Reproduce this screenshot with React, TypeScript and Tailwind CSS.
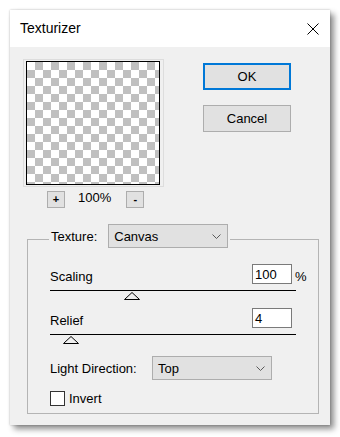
import React from "react";

const Triangle = () => (
  <svg width="16" height="8" viewBox="0 0 16 8" className="block">
    <path d="M0.5 7.5 L8 0.5 L15.5 7.5 Z" fill="none" stroke="#000" strokeWidth="1" />
  </svg>
);

const Chevron = () => (
  <svg width="9" height="5" viewBox="0 0 9 5" className="block">
    <path d="M0.5 0.5 L4.5 4.5 L8.5 0.5" fill="none" stroke="#5a5a5a" strokeWidth="1" />
  </svg>
);

const DropDown = ({ value, width }: { value: string; width: string }) => (
  <div
    className={`flex h-[24px] items-center justify-between border border-[#adadad] bg-[#e1e1e1] pl-[5px] pr-[6px] ${width}`}
  >
    <span>{value}</span>
    <Chevron />
  </div>
);

const App = () => {
  return (
    <div className="h-[437px] w-[340px] bg-white pl-[10px] pt-[10px] font-['Liberation_Sans',Arial,sans-serif] text-[13px] leading-[15px] text-black">
      <div className="flex h-[415px] w-[320px] flex-col shadow-[0_0_2px_rgba(0,0,0,0.25),4px_4px_6px_rgba(0,0,0,0.45)]">
        {/* title bar */}
        <div className="flex h-[37px] items-center justify-between bg-white pl-[10px] pr-[11px]">
          <span className="text-[14px]">Texturizer</span>
          <svg width="12" height="12" viewBox="0 0 12 12">
            <path d="M0.5 0.5 L11.5 11.5 M11.5 0.5 L0.5 11.5" stroke="#000" strokeWidth="1" />
          </svg>
        </div>

        <div className="flex-1 bg-[#f0f0f0] pl-[13px] pt-[12px]">
          <div className="flex">
            {/* preview */}
            <div className="flex flex-col">
              <div className="border border-[#dddddd] pb-[1px] pl-[2px] pr-[3px] pt-[1px]">
                <div className="h-[124px] w-[134px] border border-black bg-[repeating-conic-gradient(#c0c0c0_0%_25%,#ffffff_0%_50%)] bg-[length:16px_16px]" />
              </div>
              <div className="mt-[3px] flex items-start pl-[24px]">
                <div className="mt-[1px] flex h-[17px] w-[18px] items-center justify-center border border-[#adadad] bg-[#e1e1e1] text-[11px] font-bold">
                  +
                </div>
                <span className="ml-[13px]">100%</span>
                <div className="ml-[15px] mt-[1px] flex h-[17px] w-[18px] items-center justify-center border border-[#adadad] bg-[#e1e1e1] text-[11px] font-bold">
                  -
                </div>
              </div>
            </div>

            {/* buttons */}
            <div className="ml-[39px] flex flex-col gap-[15px] pt-[4px]">
              <div className="flex h-[27px] w-[88px] items-center justify-center border-2 border-[#0078d7] bg-[#e1e1e1]">
                OK
              </div>
              <div className="flex h-[27px] w-[88px] items-center justify-center border border-[#adadad] bg-[#e1e1e1]">
                Cancel
              </div>
            </div>
          </div>

          {/* texture group */}
          <fieldset className="ml-[4px] mt-[16px] w-[292px] border border-[#b4b4b4] pb-[7px] pl-[22px]">
            <legend className="ml-[-1px] flex items-center px-[2px] pb-[6px]">
              <span>Texture:</span>
              <div className="ml-[11px]">
                <DropDown value="Canvas" width="w-[120px]" />
              </div>
            </legend>

            <div className="mt-[10px] flex items-end">
              <span className="w-[202px]">Scaling</span>
              <div className="h-[20px] w-[40px] border border-[#7a7a7a] bg-white pl-[2px] pt-[2px]">100</div>
              <span className="ml-[3px]">%</span>
            </div>
            <div className="mt-[6px] h-px w-[246px] bg-black" />
            <div className="ml-[74px] mt-[1px]">
              <Triangle />
            </div>

            <div className="mt-[8px] flex items-end">
              <span className="w-[202px]">Relief</span>
              <div className="h-[20px] w-[40px] border border-[#7a7a7a] bg-white pl-[2px] pt-[2px]">4</div>
            </div>
            <div className="mt-[6px] h-px w-[246px] bg-black" />
            <div className="ml-[13px] mt-[1px]">
              <Triangle />
            </div>

            <div className="mt-[12px] flex items-center">
              <span className="w-[102px]">Light Direction:</span>
              <DropDown value="Top" width="w-[120px]" />
            </div>

            <div className="mt-[11px] flex items-center">
              <div className="h-[15px] w-[15px] border border-[#333333] bg-white" />
              <span className="ml-[4px]">Invert</span>
            </div>
          </fieldset>
        </div>
      </div>
    </div>
  );
};

export default App;
